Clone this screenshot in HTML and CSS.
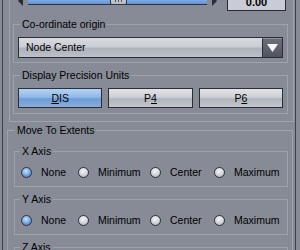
FILE: index.html
```html
<!DOCTYPE html>
<html lang="en">
<head>
    <meta charset="UTF-8">
    <title>Node Properties</title>
    <link rel="stylesheet" href="styles.css">
</head>
<body>
    <div class="window">
        <div class="outer">
            <div class="slider-row">
                <span class="arrow-left"></span>
                <div class="track">
                    <div class="thumb"><i></i><i></i><i></i></div>
                </div>
                <span class="arrow-right"></span>
                <div class="value">0.00</div>
            </div>

            <fieldset class="group">
                <legend>Co-ordinate origin</legend>
                <div class="dropdown">
                    <span class="dd-text">Node Center</span>
                    <span class="dd-btn">
                        <svg width="11" height="8" viewBox="0 0 11 8"><polygon points="0,0 11,0 5.5,8" fill="#f4f5f8"/></svg>
                    </span>
                </div>
            </fieldset>

            <fieldset class="group">
                <legend>Display Precision Units</legend>
                <div class="units">
                    <button class="unit active"><u>D</u>IS</button>
                    <button class="unit">P<u>4</u></button>
                    <button class="unit">P<u>6</u></button>
                </div>
            </fieldset>
        </div>

        <fieldset class="extents">
            <legend>Move To Extents</legend>

            <fieldset class="axis">
                <legend>X Axis</legend>
                <div class="radios">
                    <label class="opt"><span class="radio checked"></span>None</label>
                    <label class="opt"><span class="radio"></span>Minimum</label>
                    <label class="opt"><span class="radio"></span>Center</label>
                    <label class="opt"><span class="radio"></span>Maximum</label>
                </div>
            </fieldset>

            <fieldset class="axis">
                <legend>Y Axis</legend>
                <div class="radios">
                    <label class="opt"><span class="radio checked"></span>None</label>
                    <label class="opt"><span class="radio"></span>Minimum</label>
                    <label class="opt"><span class="radio"></span>Center</label>
                    <label class="opt"><span class="radio"></span>Maximum</label>
                </div>
            </fieldset>

            <fieldset class="axis">
                <legend>Z Axis</legend>
                <div class="radios">
                    <label class="opt"><span class="radio checked"></span>None</label>
                    <label class="opt"><span class="radio"></span>Minimum</label>
                    <label class="opt"><span class="radio"></span>Center</label>
                    <label class="opt"><span class="radio"></span>Maximum</label>
                </div>
            </fieldset>
        </fieldset>
    </div>
</body>
</html>
```

FILE: styles.css
```css
body {
    margin: 0;
    background-color: #878b96;
    font-family: "Liberation Sans", Arial, sans-serif;
    font-size: 10.5px;
    color: #000;
    overflow: hidden;
}

.window {
    margin-left: 2px;
    width: 292px;
    height: 250px;
    border-left: 1px solid #3c4048;
    border-right: 1px solid #3c4048;
    overflow: hidden;
}

.outer {
    margin: -12px 1px 0 6px;
    padding: 2px 0 7px 0;
    border: 1px solid #9ea2ac;
}

.slider-row {
    display: flex;
    align-items: center;
    height: 20px;
    padding-left: 8px;
}

.arrow-left {
    width: 0;
    height: 0;
    border-top: 5px solid transparent;
    border-bottom: 5px solid transparent;
    border-right: 5px solid #2a2d35;
}

.arrow-right {
    width: 0;
    height: 0;
    margin-left: 5px;
    border-top: 5px solid transparent;
    border-bottom: 5px solid transparent;
    border-left: 5px solid #2a2d35;
}

.track {
    position: relative;
    margin-left: 5px;
    width: 179px;
    height: 7px;
    box-sizing: border-box;
    background: linear-gradient(#8fb8ec, #5e92d6);
    border-bottom: 1px solid #2a3450;
}

.thumb {
    position: absolute;
    left: 82px;
    top: -5px;
    width: 17px;
    height: 12px;
    box-sizing: border-box;
    border: 1px solid #34373f;
    border-radius: 0 0 2px 2px;
    background: linear-gradient(#e2e4e9, #b4b8c0);
    display: flex;
    justify-content: center;
    align-items: flex-end;
    gap: 2px;
    padding-bottom: 2px;
}

.thumb i {
    width: 1px;
    height: 6px;
    background-color: #4a4e58;
}

.value {
    margin-left: 10px;
    width: 59px;
    height: 20px;
    box-sizing: border-box;
    border: 1px solid #2a2c32;
    background-color: #c9ccd6;
    font-weight: bold;
    font-size: 11px;
    text-align: center;
    line-height: 15px;
    padding-top: 3px;
}

fieldset {
    margin: 0;
    min-inline-size: 0;
    border: 1px solid #9ea2ac;
}

legend {
    padding: 0 2px;
    line-height: 12px;
}

.group {
    margin: 7px 5px 0 3px;
    padding: 7px 4px 4px 4px;
}

.group legend {
    margin-left: 2px;
}

.group + .group {
    margin-top: 6px;
    padding-bottom: 5px;
}

.dropdown {
    display: flex;
    height: 21px;
    box-sizing: border-box;
    border: 1px solid #2c2e35;
    background: linear-gradient(#d8dae0 0%, #cbced5 45%, #aeb2bb 55%, #bcc0c7 100%);
}

.dd-text {
    flex: 1;
    padding-left: 7px;
    line-height: 19px;
}

.dd-btn {
    width: 20px;
    box-sizing: border-box;
    border-left: 1px solid #2c2e35;
    border-top: 1px solid #8c909a;
    background: linear-gradient(#6a6e78, #50545e);
    display: flex;
    align-items: center;
    justify-content: center;
}

.units {
    display: grid;
    grid-template-columns: 1fr 1fr 1fr;
    gap: 6px;
}

.unit {
    height: 20px;
    padding: 0;
    border: 1px solid #2c2e35;
    font-family: inherit;
    font-size: 10.5px;
    color: #000;
    background: linear-gradient(#e0e2e7 0%, #cdd0d6 45%, #b1b5bd 55%, #c2c5cc 100%);
}

.unit.active {
    background: linear-gradient(#b6d2f0 0%, #92bae6 45%, #6e9cd6 55%, #86aede 100%);
}

.extents {
    margin: 2px 2px 0 4px;
    padding: 9px 4px 0 6px;
}

.extents legend {
    margin-left: 1px;
}

.axis {
    padding: 8px 6px 7px 6px;
}

.axis legend {
    margin-left: -1px;
}

.axis + .axis {
    margin-top: 6px;
}

.radios {
    display: grid;
    grid-template-columns: 57px 72px 64px auto;
    height: 14px;
    align-items: center;
}

.opt {
    display: flex;
    align-items: center;
    white-space: nowrap;
}

.radio {
    width: 11px;
    height: 11px;
    box-sizing: border-box;
    margin-right: 9px;
    border-radius: 50%;
    border: 1px solid #2e323c;
    background: radial-gradient(circle at 45% 35%, #f2f3f6 0%, #d2d5db 50%, #9a9ea7 100%);
}

.radio.checked {
    background: radial-gradient(circle at 45% 35%, #cfe4fa 0%, #7eaee6 45%, #3c6fb8 100%);
}
```
